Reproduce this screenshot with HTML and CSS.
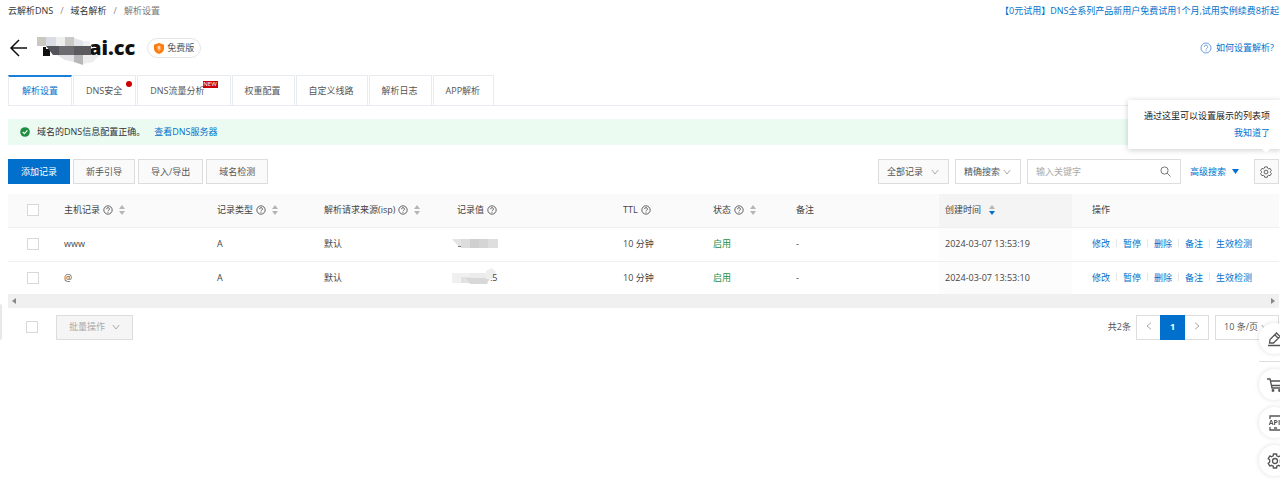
FILE: index.html
```html
<!DOCTYPE html>
<html lang="zh-CN">
<head>
<meta charset="utf-8">
<title>解析设置</title>
<link rel="stylesheet" href="styles.css">
</head>
<body>
<svg class="defs" aria-hidden="true">
  <symbol id="help" viewBox="0 0 12 12"><g fill="none" stroke="currentColor"><circle cx="6" cy="6" r="5"/><path d="M4.3 4.9a1.7 1.7 0 1 1 2.4 1.5q-.7.3-.7 1.1M6 8.3v1"/></g></symbol>
  <symbol id="sort" viewBox="0 0 6 10"><path d="M0 4 3 0l3 4z"/><path class="down" d="M0 6h6L3 10z"/></symbol>
  <symbol id="chev" viewBox="0 0 8 8"><path d="M.8 2 4 6l3.200-4" fill="none" stroke="currentColor"/></symbol>
  <symbol id="gear" viewBox="0 0 16 16"><g fill="none" stroke="currentColor" stroke-width="1.200" stroke-linejoin="round"><path d="M6.300 1.200h3.400l.6 1.900 1.300.7 1.900-.5 1.700 2.900-1.300 1.400v1l1.300 1.400-1.700 2.900-1.900-.5-1.300.7-.6 1.900H6.300l-.6-1.900-1.300-.7-1.900.5L.8 10l1.300-1.400v-1L.8 6.200l1.700-2.900 1.900.5 1.300-.7z"/><circle cx="8" cy="8.100" r="2.500"/></g></symbol>
</svg>
<div class="page">
  <header class="top">
    <nav class="crumbs"><a href="#">云解析DNS</a><i>/</i><a href="#">域名解析</a><i>/</i><span>解析设置</span></nav>
    <a class="link" href="#">【0元试用】DNS全系列产品新用户免费试用1个月,试用实例续费8折起</a>
  </header>
  <div class="title-row">
    <button class="back" aria-label="返回"><svg width="20" height="18" viewBox="0 0 20 18"><path d="M11 1 3 9l8 8M3 9h16" fill="none" stroke="#111" stroke-width="1.500"/></svg></button>
    <h1><svg width="66" height="34" viewBox="0 -6 66 34">
      <path fill="#111" d="M6 10h3v9H6zM9 12h4v7H9z"/>
      <path fill="#cbc8c2" d="M0 0h10v9H0z"/><path fill="#dadce5" d="M9 0h10v9H9z"/><path fill="#eee" d="M19 0h9v9h-9z"/><path fill="#cbc9c6" d="M28 0h9v9h-9z"/><path fill="#e4e5e8" d="M37 1l9 3v5h-9z"/><path fill="#f1f1f1" d="M46 4h7v5h-7z"/>
      <path fill="#55545a" d="M9 9h28v9H16z"/><path fill="#6c6b70" d="M22 9h15v9H22z"/><path fill="#5b5b5e" d="M37 9h17v9H37z"/>
      <path fill="#e4e4e8" d="M20 18h17v7l-9-2z"/><path fill="#b7b7ba" d="M37 18h9v10l-9-3z"/><path fill="#ededee" d="M46 18h17l-7 7-10 2z"/></svg><span>ai.cc</span></h1>
    <span class="plan"><svg width="10" height="11" viewBox="0 0 11 12"><path d="M5.500 0 11 1.800V6q0 4-5.500 6Q0 10 0 6V1.800z" fill="#ff7a0c"/><path d="M5.500 3v4" stroke="#fff" stroke-width="1.500"/><path d="M3.500 3v3q0 2 2 3 2-1 2-3V3" fill="none" stroke="#ffc58f" stroke-width=".7"/></svg>免费版</span>
    <a class="link help" href="#"><svg width="12" height="12"><use href="#help"/></svg>如何设置解析?</a>
  </div>
  <nav class="tabs">
    <a class="on" href="#">解析设置</a><a href="#">DNS安全<b class="dot"></b></a><a class="wide" href="#">DNS流量分析<b class="new">NEW</b></a><a href="#">权重配置</a><a href="#">自定义线路</a><a href="#">解析日志</a><a href="#">APP解析</a>
  </nav>
  <div class="alert"><svg width="10" height="10" viewBox="0 0 10 10"><circle cx="5" cy="5" r="4.800" fill="#1e8e3e"/><path d="m2.700 5 1.700 1.700 3-3.300" fill="none" stroke="#fff" stroke-width="1.200"/></svg><span>域名的DNS信息配置正确。</span><a class="link" href="#">查看DNS服务器</a></div>
  <div class="toolbar">
    <button class="btn primary">添加记录</button><button class="btn">新手引导</button><button class="btn">导入/导出</button><button class="btn">域名检测</button>
    <div class="filters">
      <span class="pick soft"><select aria-label="记录范围"><option>全部记录</option></select><svg width="8" height="8"><use href="#chev"/></svg></span>
      <span class="pick mode"><select aria-label="搜索方式"><option>精确搜索</option></select><svg width="8" height="8"><use href="#chev"/></svg></span>
      <span class="search"><input type="text" aria-label="关键字" placeholder="输入关键字"><svg width="11" height="11" viewBox="0 0 11 11" fill="none" stroke="#777"><circle cx="4.500" cy="4.500" r="3.600"/><path d="m7.200 7.200 3.300 3.300"/></svg></span>
      <button class="advanced">高级搜索<svg width="7" height="5" viewBox="0 0 7 5"><path d="M0 0h7L3.500 5z" fill="currentColor"/></svg></button>
      <span class="setting"><button class="btn cog" aria-label="列表设置"><svg width="12" height="12"><use href="#gear"/></svg></button>
        <span class="tip" role="tooltip"><span>通过这里可以设置展示的列表项</span><a class="link" href="#">我知道了</a></span></span>
    </div>
  </div>
  <table>
    <colgroup><col class="c-check"><col class="c-host"><col class="c-type"><col class="c-isp"><col class="c-value"><col class="c-ttl"><col class="c-state"><col class="c-note"><col class="c-time"><col></colgroup>
    <thead><tr>
      <th><input type="checkbox" aria-label="全选"></th>
      <th>主机记录<svg class="q"><use href="#help"/></svg><svg class="sort"><use href="#sort"/></svg></th>
      <th>记录类型<svg class="q"><use href="#help"/></svg><svg class="sort"><use href="#sort"/></svg></th>
      <th>解析请求来源(isp)<svg class="q"><use href="#help"/></svg><svg class="sort"><use href="#sort"/></svg></th>
      <th>记录值<svg class="q"><use href="#help"/></svg></th>
      <th>TTL<svg class="q"><use href="#help"/></svg></th>
      <th>状态<svg class="q"><use href="#help"/></svg><svg class="sort"><use href="#sort"/></svg></th>
      <th>备注</th>
      <th class="time">创建时间<svg class="sort desc"><use href="#sort"/></svg></th>
      <th class="ops">操作</th>
    </tr></thead>
    <tbody>
      <tr><td><input type="checkbox" aria-label="选择 www"></td><td>www</td><td>A</td><td>默认</td>
        <td><svg class="mask" width="47" height="16" viewBox="0 0 47 16"><path fill="#e4e4e4" d="M0 3h10v8H7z"/><path fill="#777" d="M6 10h3v1H6z"/><path fill="#ddd" d="M9 3h10v9H9z"/><path fill="#cfcfcf" d="M18 3h10v9H18z"/><path fill="#d5d5d5" d="M27 3h10v9H27z"/><path fill="#dedede" d="M36 3h10v9H36z"/></svg></td>
        <td>10 分钟</td><td class="ok">启用</td><td>-</td><td class="time">2024-03-07 13:53:19</td>
        <td class="ops"><a href="#">修改</a><a href="#">暂停</a><a href="#">删除</a><a href="#">备注</a><a href="#">生效检测</a></td></tr>
      <tr><td><input type="checkbox" aria-label="选择 @"></td><td>@</td><td>A</td><td>默认</td>
        <td><span class="value"><svg class="mask" width="45" height="20" viewBox="0 0 45 20"><path fill="#f0f0f0" d="M0 5h18v10H0z"/><path fill="#e2e2e2" d="M9 9h9v6H9z"/><path fill="#ebebeb" d="M18 5h20v5H18z"/><path fill="#d8d8d8" d="M14 10h24l-3 6H18z"/><path fill="#eee" d="M34 3l6-3 4 4-4 7h-6z"/></svg><span>.5</span></span></td>
        <td>10 分钟</td><td class="ok">启用</td><td>-</td><td class="time">2024-03-07 13:53:10</td>
        <td class="ops"><a href="#">修改</a><a href="#">暂停</a><a href="#">删除</a><a href="#">备注</a><a href="#">生效检测</a></td></tr>
    </tbody>
  </table>
  <div class="scroll"><svg width="4" height="6" viewBox="0 0 4 6"><path d="M4 0v6L0 3z" fill="#888"/></svg><svg width="4" height="6" viewBox="0 0 4 6"><path d="M0 0v6l4-3z" fill="#888"/></svg></div>
  <footer class="foot">
    <input type="checkbox" aria-label="全选本页">
    <button class="btn batch" disabled>批量操作<svg width="8" height="8"><use href="#chev"/></svg></button>
    <span class="total">共2条</span>
    <div class="pager"><button aria-label="上一页"><svg class="prev" width="8" height="8"><use href="#chev"/></svg></button><button class="cur">1</button><button aria-label="下一页"><svg class="next" width="8" height="8"><use href="#chev"/></svg></button></div>
    <span class="pick size"><select aria-label="每页条数"><option>10 条/页</option></select><svg width="8" height="8"><use href="#chev"/></svg></span>
  </footer>
</div>
<span class="drawer"></span>
<aside class="dock">
  <button aria-label="反馈"><svg width="16" height="16" viewBox="0 0 16 16" fill="none" stroke="currentColor" stroke-width="1.300"><path d="M2.500 12 3 8.500 9.500 2l3.500 3.500L6.500 12zM7.800 3.800l3.400 3.400M1 14.500h14"/></svg></button>
  <hr>
  <button aria-label="购物车"><svg width="16" height="16" viewBox="0 0 16 16" fill="none" stroke="currentColor" stroke-width="1.300"><path d="M0 2h3l2 9h10M3.500 4H15l-1 4.500H4.500"/><circle cx="6" cy="13.500" r=".8"/><circle cx="12.500" cy="13.500" r=".8"/></svg></button>
  <button class="api" aria-label="API"><svg width="16" height="16" viewBox="0 0 16 16" fill="none" stroke="currentColor" stroke-width="1.300"><path d="M3 4V1h11v3M3 12v3h11v-3M7 13h3"/></svg><span>API</span></button>
  <button aria-label="设置"><svg width="16" height="16" viewBox="0 0 16 16" fill="none" stroke="currentColor" stroke-width="1.300" stroke-linejoin="round"><path d="M6.300 1h3.400v1.800q1 .3 1.800 1l1.600-.9 1.800 2.900-1.600 1q.2 1.200 0 2.400l1.600 1-1.800 2.900-1.600-.9q-.8.700-1.800 1V15H6.300v-1.800q-1-.3-1.800-1l-1.600.9-1.800-2.900 1.600-1q-.2-1.200 0-2.400l-1.600-1 1.800-2.900 1.600.9q.8-.7 1.800-1z"/><circle cx="8" cy="8" r="2.500"/></svg></button>
</aside>
</body>
</html>
```
FILE: styles.css
```css
* { box-sizing: border-box; }
body { margin: 0; min-height: 100vh; overflow: hidden; background: #fff; color: #333; font: 9px/14px "Open Sans", "Noto Sans CJK SC", sans-serif; }
button, input, select { font: inherit; color: inherit; margin: 0; }
button { padding: 0; border: 0; background: none; }
a { color: inherit; text-decoration: none; }
svg { flex: none; }
.defs { position: absolute; width: 0; height: 0; }
.link, .advanced, .ops a { color: #0070cc; }
.page { padding: 4px 1px 0 8px; }
.top { display: flex; justify-content: space-between; }
.crumbs { display: flex; gap: 7px; }
.crumbs i { font-style: normal; color: #888; }
.crumbs span { color: #777; }
.title-row { display: flex; align-items: center; height: 34px; margin-top: 13px; }
.back { display: flex; width: 29px; }
h1 { display: flex; align-items: center; margin: 0; font-size: 20px; line-height: 28px; font-weight: 800; color: #111; }
h1 svg { position: relative; margin-right: -14px; }
.plan { display: flex; align-items: center; gap: 3px; height: 20px; margin-left: 12px; padding: 0 6px; border: 1px solid #e5e5e5; border-radius: 10px; color: #555; }
.help { display: flex; align-items: center; gap: 4px; margin-left: auto; padding-right: 5px; }
.help svg { color: #6f9fe0; }
.tabs { display: flex; gap: 1px; margin-top: 10px; border-bottom: 1px solid #e8ecf0; }
.tabs a { position: relative; height: 30px; padding: 8px 13px 0 12px; border: 1px solid #e8ecf0; border-bottom: 0; color: #555; }
.tabs .on { color: #0070cc; border-top: 2px solid #1a7fdb; padding: 7px 13px 0; }
.tabs .wide { padding-right: 25px; }
.dot { position: absolute; top: 5px; right: 3px; width: 6px; height: 6px; border-radius: 50%; background: #c00; }
.new { position: absolute; top: 5px; right: 12px; width: 15px; background: #c8000a; color: #fff; font-size: 6px; line-height: 7px; font-weight: 400; text-align: center; }
.alert { display: flex; align-items: center; height: 26px; margin-top: 13px; padding-left: 12px; background: #ebfbf1; }
.alert span { margin: 0 9px 0 7px; }
.toolbar { display: flex; gap: 3px; margin-top: 14px; height: 26px; }
.btn { height: 25px; padding: 0 12px; border: 1px solid #ddd; background: #fafafa; color: #555; }
.primary { background: #0070cc; border-color: #0070cc; color: #fff; }
.filters { display: flex; align-items: center; height: 25px; margin-left: auto; }
.pick { position: relative; display: flex; align-items: center; border: 1px solid #ddd; height: 25px; background: #fff; color: #555; }
.pick select { appearance: none; width: 100%; height: 100%; border: 0; padding: 0 8px; background: none; }
.pick svg { position: absolute; right: 9px; color: #aaa; }
.soft { width: 71px; background: #fafafa; margin-right: 6px; }
.mode { width: 66px; margin-right: 6px; }
.search { display: flex; align-items: center; width: 154px; height: 25px; padding: 0 9px 0 8px; border: 1px solid #ddd; }
.search input { flex: 1; min-width: 0; border: 0; padding: 0; outline: 0; background: none; }
.search input::placeholder { color: #aaa; }
.advanced { display: flex; align-items: center; gap: 6px; margin: 0 15px 0 9px; }
.setting { position: relative; }
.cog { display: flex; align-items: center; width: 25px; padding: 0 5px; }
.tip { position: absolute; right: -2px; bottom: 35px; display: flex; flex-direction: column; align-items: flex-end; gap: 3px; width: 153px; padding: 9px 11px; background: #fff; box-shadow: 0 1px 6px #0003; white-space: nowrap; color: #222; }
.tip::after { content: ""; position: absolute; right: 11px; bottom: -4px; border: solid transparent; border-width: 4px 4px 0; border-top-color: #fff; }
table { width: 100%; margin-top: 9px; table-layout: fixed; border-collapse: collapse; }
.c-check { width: 50px; } .c-host { width: 153px; } .c-type { width: 107px; } .c-isp { width: 133px; } .c-value { width: 166px; }
.c-ttl { width: 90px; } .c-state { width: 83px; } .c-note { width: 149px; } .c-time { width: 133px; }
th, td { height: 34px; padding: 0 6px; text-align: left; font-weight: 400; white-space: nowrap; border-bottom: 1px solid #eef1f4; color: #444; }
th { height: 33px; background: #fafafa; }
td.time { background: #fcfcfc; }
th.time { background: #f4f4f4; }
th:first-child, td:first-child { padding-left: 19px; }
th.ops, td.ops { padding-left: 20px; }
td.ok { color: #1e8e3e; }
tbody tr:last-child td { height: 33px; border: 0; }
.ops a + a::before { content: ""; display: inline-block; width: 1px; height: 8px; margin: 0 6px; background: #e5e5e5; }
input[type="checkbox"] { appearance: none; display: block; width: 12px; height: 12px; border: 1px solid #d8d8d8; background: #fff; }
.q { width: 10px; height: 10px; margin-left: 3px; vertical-align: -2px; }
.sort { width: 6px; height: 10px; margin-left: 6px; vertical-align: -2px; fill: #b5b5b5; }
.desc { --down: #0070cc; margin-left: 8px; }
.down { fill: var(--down, #b5b5b5); }
.mask { display: block; margin-left: -5px; }
.value { display: flex; align-items: center; }
.value .mask { margin-right: -7px; }
.scroll { display: flex; align-items: center; justify-content: space-between; height: 14px; padding: 0 4px; background: #f0f0f0; }
.foot { display: flex; align-items: center; height: 26px; margin-top: 6px; padding-left: 18px; }
.batch { display: flex; align-items: center; gap: 7px; margin-left: 18px; background: #f5f5f5; color: #aaa; }
.total { margin-left: auto; color: #555; }
.pager { display: flex; margin: 0 6px 0 5px; border: 1px solid #ddd; height: 25px; }
.pager button { width: 23px; color: #aaa; }
.pager .cur { width: 25px; margin: -1px 0; background: #0070cc; color: #fff; font-weight: 700; }
.prev { transform: rotate(90deg); }
.next { transform: rotate(-90deg); }
.size { width: 64px; }
.drawer { position: absolute; left: 0; top: 304px; width: 2px; height: 36px; border-radius: 0 2px 2px 0; background: #e8e8e8; }
.dock { position: fixed; top: 323px; right: -10px; display: flex; flex-direction: column; align-items: center; gap: 7px; width: 31px; color: #555; }
.dock button { display: flex; align-items: center; justify-content: center; flex: none; width: 31px; height: 31px; border-radius: 50%; background: #fff; box-shadow: 0 0 5px #0002; }
.dock hr { width: 100%; margin: 0; border: 0; border-top: 1px solid #ddd; }
.api { position: relative; }
.api span { position: absolute; font-size: 7px; font-weight: 700; }
```
